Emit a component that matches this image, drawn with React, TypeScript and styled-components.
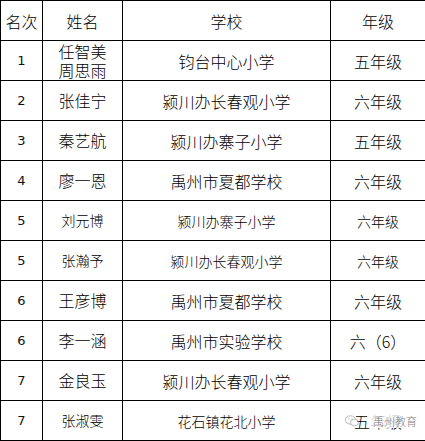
import * as React from 'react'
import styled, { createGlobalStyle, css } from 'styled-components'

const GlobalStyle = createGlobalStyle`
  html, body {
    margin: 0;
    padding: 0;
    background: #fff;
  }
  body {
    font-family: "Noto Sans CJK SC", "Noto Sans", sans-serif;
    color: #000;
  }
`

const Table = styled.table`
  width: 425px;
  border-collapse: collapse;
  table-layout: fixed;
`

const cellBase = css<{ $size?: number }>`
  height: 39px;
  padding: 0;
  border: 1px solid #000;
  text-align: center;
  vertical-align: middle;
  font-size: ${(p) => p.$size ?? 16}px;
  line-height: 18px;
  font-weight: 300;
  position: relative;
`

const HeadCell = styled.th<{ $size?: number }>`
  ${cellBase}
  font-weight: 300;
`

const Cell = styled.td<{ $size?: number }>`
  ${cellBase}
`

const RankCell = styled.td`
  ${cellBase}
  font-size: 13px;
  font-family: "DejaVu Sans", "Noto Sans CJK SC", sans-serif;
  font-weight: 400;
  color: #111;
`

const NameLine = styled.div`
  line-height: 19px;
`

const Watermark = styled.div`
  position: absolute;
  left: 14px;
  top: 13px;
  height: 14px;
  display: flex;
  align-items: center;
  gap: 8px;
  pointer-events: none;
`

const Badge = styled.svg`
  width: 14px;
  height: 12px;
  opacity: 0.5;
`

const MarkText = styled.span`
  background: rgba(255, 255, 255, 0.82);
  color: #808080;
  font-size: 11px;
  line-height: 14px;
  padding-left: 6px;
`

type Row = {
  rank: string
  name: string[]
  school: string
  grade: string
  size?: number
  mark?: boolean
}

const rows: Row[] = [
  { rank: '1', name: ['任智美', '周思雨'], school: '钧台中心小学', grade: '五年级' },
  { rank: '2', name: ['张佳宁'], school: '颍川办长春观小学', grade: '六年级' },
  { rank: '3', name: ['秦艺航'], school: '颍川办寨子小学', grade: '五年级' },
  { rank: '4', name: ['廖一恩'], school: '禹州市夏都学校', grade: '六年级' },
  { rank: '5', name: ['刘元博'], school: '颍川办寨子小学', grade: '六年级', size: 14 },
  { rank: '5', name: ['张瀚予'], school: '颍川办长春观小学', grade: '六年级', size: 14 },
  { rank: '6', name: ['王彦博'], school: '禹州市夏都学校', grade: '六年级' },
  { rank: '6', name: ['李一涵'], school: '禹州市实验学校', grade: '六（6）' },
  { rank: '7', name: ['金良玉'], school: '颍川办长春观小学', grade: '六年级' },
  { rank: '7', name: ['张淑雯'], school: '花石镇花北小学', grade: '五年级', size: 14, mark: true },
]

const WechatBadge = () => (
  <Badge viewBox="0 0 14 12">
    <ellipse cx="5.5" cy="5" rx="5" ry="4.2" fill="none" stroke="#777" strokeWidth="1" />
    <ellipse cx="9.5" cy="7.5" rx="4" ry="3.4" fill="#fff" stroke="#777" strokeWidth="1" />
    <circle cx="4" cy="4" r="0.7" fill="#777" />
    <circle cx="7" cy="4" r="0.7" fill="#777" />
  </Badge>
)

export default function App() {
  return (
    <>
      <GlobalStyle />
      <Table>
        <colgroup>
          <col style={{ width: 42 }} />
          <col style={{ width: 80 }} />
          <col style={{ width: 208 }} />
          <col style={{ width: 95 }} />
        </colgroup>
        <thead>
          <tr>
            <HeadCell>名次</HeadCell>
            <HeadCell>姓名</HeadCell>
            <HeadCell>学校</HeadCell>
            <HeadCell>年级</HeadCell>
          </tr>
        </thead>
        <tbody>
          {rows.map((r, i) => (
            <tr key={i}>
              <RankCell>{r.rank}</RankCell>
              <Cell $size={r.size}>
                {r.name.map((n, j) => (
                  <NameLine key={j}>{n}</NameLine>
                ))}
              </Cell>
              <Cell $size={r.size}>{r.school}</Cell>
              <Cell $size={r.mark ? 16 : r.size}>
                {r.grade}
                {r.mark && (
                  <Watermark>
                    <WechatBadge />
                    <MarkText>禹州教育</MarkText>
                  </Watermark>
                )}
              </Cell>
            </tr>
          ))}
        </tbody>
      </Table>
    </>
  )
}
